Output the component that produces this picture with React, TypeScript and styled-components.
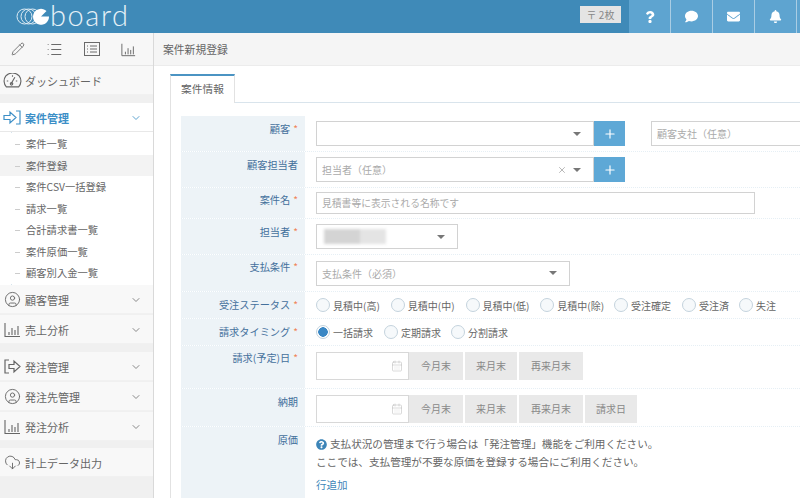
import React from "react";
import styled, { createGlobalStyle } from "styled-components";
import { FaQuestion, FaComment, FaEnvelope, FaBell, FaQuestionCircle } from "react-icons/fa";
import { ChevronDown, Plus, X, Pencil, List, CircleUser, CloudDownload, CalendarDays } from "lucide-react";

const Global = createGlobalStyle`
  html, body { margin: 0; padding: 0; background: #fff; }
  body { font-family: "Noto Sans CJK JP", "Noto Sans", sans-serif; font-size: 10.5px; color: #666; }
  * { box-sizing: border-box; }
`;

const Page = styled.div`width: 800px; height: 498px; overflow: hidden; display: flex; flex-direction: column;`;

/* header */
const Header = styled.header`height: 33px; flex: none; display: flex; align-items: stretch; background: #3f8ab8;`;
const Logo = styled.div`display: flex; align-items: center; padding-left: 16px; flex: 1;`;
const LogoText = styled.span`font-family: Lato, "Open Sans", sans-serif; font-weight: 300; font-size: 29px; line-height: 27px; letter-spacing: 1.6px; color: #e6f1f7; margin-bottom: 5px;`;
const Stamp = styled.div`align-self: flex-start; margin: 6px 8px 0 0; width: 41px; height: 17px; background: #e4e4e4; color: #888; font-size: 10px; line-height: 17px; text-align: center;`;
const HeadBtn = styled.button`width: 42px; border: 0; border-right: 1px solid #a9cde4; background: #5ea4d0; color: #fff; display: flex; align-items: center; justify-content: center; padding: 0; font-size: 14px;`;
const HeadEnd = styled.div`width: 3px; background: #5ea4d0;`;

const Body = styled.div`flex: 1; display: flex; min-height: 0;`;

/* sidebar */
const Sidebar = styled.aside`width: 154px; flex: none; background: #f0f0f0; border-right: 1px solid #d9d9d9; display: flex; flex-direction: column;`;
const ToolBar = styled.div`height: 33px; background: #f7f7f7; border-bottom: 1px solid #e6e6e6; display: flex; align-items: center; justify-content: space-between; padding: 0 17px 0 11px; color: #6a6a6a;`;
const Group = styled.div`display: flex; flex-direction: column; gap: 1px; margin-bottom: ${p => p.$gap ?? 8}px;`;
const NavItem = styled.div`height: 29px; display: flex; align-items: center; padding: 1px 11px 0 3px; gap: 3px; font-size: 11px;
  background: ${p => p.$active ? "#fff" : "#f8f8f8"};
  color: ${p => p.$active ? "#3d8fc7" : "#666"};
  font-weight: ${p => p.$active ? 700 : 400};
  border-bottom: 1px solid ${p => p.$active ? "#e8e8e8" : "#f1f1f1"};
`;
const NavLabel = styled.span`flex: 1; white-space: nowrap;`;
const NavIcon = styled.span`width: 19px; height: 19px; display: flex; align-items: center; justify-content: center; flex: none;`;
const Chevron = styled(ChevronDown)`color: ${p => p.$active ? "#5ea4d0" : "#888"}; flex: none;`;
const SubList = styled.div`background: #fff; padding: 1px 0 1.5px; position: relative;
  &::before { content: ""; position: absolute; left: 11px; top: 0; bottom: 0; width: 1px; background: #d5e3ec; }`;
const SubItem = styled.div`height: 21.5px; line-height: 21.5px; padding-left: 26px; font-size: 10.3px; white-space: nowrap; color: #666; position: relative;
  background: ${p => p.$active ? "#f3f3f3" : "#fff"};
  &::before { content: ""; position: absolute; left: 15px; top: 11px; width: 5px; height: 1px; background: #ccc; }`;

/* main */
const Main = styled.main`flex: 1; min-width: 0; display: flex; flex-direction: column;`;
const Crumb = styled.div`height: 33px; flex: none; background: #f5f5f5; border-bottom: 1px solid #ececec; padding-left: 9px; line-height: 33px; font-size: 10.8px; color: #666;`;
const Panel = styled.div`flex: 1; padding: 8px 0 0 16px; display: flex; flex-direction: column; min-height: 0;`;
const Tabs = styled.div`height: 29px; flex: none; border-bottom: 1px solid #d9e4ec; display: flex;`;
const Tab = styled.div`width: 65px; height: 29px; background: #fff; border: 1px solid #e2e2e2; border-top: 2px solid #4b94c3; border-bottom: 0; text-align: center; line-height: 26px; font-size: 10.7px; color: #666;`;
const Content = styled.div`flex: 1; border-left: 1px solid #e2e2e2; padding: 13px 0 0 10px;`;
const Row = styled.div`display: flex; height: ${p => p.$h}px; border-bottom: 1px dotted #e6eff5;`;
const Label = styled.div`width: 124px; flex: none; background: #edf3f7; color: #44709c; text-align: right; font-size: 10.2px; padding: ${p => p.$top ?? 5}px 7px 0 0; white-space: nowrap;
  i { font-style: normal; color: #f0855a; margin-left: 3px; }`;
const Field = styled.div`flex: 1; min-width: 0; display: flex; align-items: ${p => p.$start ? "flex-start" : "center"}; padding-left: 11px; position: relative; ${p => p.$col ? "flex-direction: column; align-items: flex-start;" : ""}`;
const Input = styled.div`width: ${p => p.$w}px; height: ${p => p.$h ?? 25}px; flex: none; border: 1px solid #d2d2d2; background: #fff; display: flex; align-items: center; padding: 0 5px; color: #aaa; font-size: ${p => p.$fs ?? 10}px; white-space: nowrap; gap: 6px;`;
const Hint = styled.span`flex: 1; overflow: hidden;`;
const Caret = styled.span`width: 0; height: 0; border: 4px solid transparent; border-top: 4.5px solid #777; border-bottom: 0; flex: none; margin-right: 7px;`;
const AddBtn = styled.button`width: 31px; height: 25px; flex: none; border: 0; padding: 0; background: #5ea8d6; color: #fff; display: flex; align-items: center; justify-content: center;`;
const Branch = styled(Input)`margin-left: 26px;`;
const Blurred = styled.span`width: 62px; height: 15px; margin-left: 2px; background: linear-gradient(90deg, #d4d4d4 0 58%, #e4e4e4 58% 100%); filter: blur(1.5px);`;
const Radios = styled.div`display: flex; align-items: center;`;
const RadioItem = styled.label`display: flex; align-items: center; gap: 3px; margin-right: ${p => p.$mr}px; font-size: 10px; color: #666; white-space: nowrap;`;
const Dot = styled.span`width: 14px; height: 14px; border-radius: 50%; flex: none; border: 1px solid #c4d3dd; background: ${p => p.$on ? "radial-gradient(circle, #3a87c4 0 4.5px, #fff 5px)" : "#f6f9fb"};`;
const DateGroup = styled.div`display: flex; gap: 2px; margin-top: 6px;`;
const DateInput = styled.div`width: 93px; height: 28px; border: 1px solid #d8d8d8; background: #fff; display: flex; align-items: center; justify-content: flex-end; padding-right: 5px; color: #b5b5b5; margin-right: -2px;`;
const DateBtn = styled.div`width: ${p => p.$w}px; height: 28px; background: #e9e9e9; color: #888; font-size: 10px; line-height: 27px; text-align: center;`;
const Note = styled.p`margin: 8px 0 0; font-size: 10.6px; line-height: 18px; color: #666; white-space: nowrap;
  svg { color: #3d85b8; vertical-align: -2px; margin-right: 3px; }`;
const AddLink = styled.a`margin-top: 6px; font-size: 10.5px; color: #3d85b8;`;

const Bars = ({ size = 17 }: { size?: number }) => (
  <svg width={size} height={size} viewBox="0 0 17 17" fill="none" stroke="currentColor" strokeWidth="1.1">
    <path d="M1 2v13.5h15M5 14v-3M8 14V7M11 14v-5M14 14V5" />
  </svg>
);
const ArrowIn = () => (
  <svg width="19" height="15" viewBox="0 0 19 15" fill="none" stroke="currentColor" strokeWidth="1.2">
    <path d="M1 5.5h6V2l6 5.5L7 13V9.5H1zM13 1h4v13h-4" />
  </svg>
);
const ArrowOut = () => (
  <svg width="19" height="15" viewBox="0 0 19 15" fill="none" stroke="currentColor" strokeWidth="1.2">
    <path d="M6 1H2v13h4M6 5.5h5V2l6 5.5L11 13V9.5H6z" />
  </svg>
);
const BoxList = () => (
  <svg width="16" height="14" viewBox="0 0 16 14" fill="none" stroke="currentColor" strokeWidth="1">
    <rect x=".5" y=".5" width="15" height="13" /><path d="M3 4h1M3 7h1M3 10h1M6 4h7M6 7h7M6 10h7" />
  </svg>
);
const GaugeIcon = () => (
  <svg width="20" height="15" viewBox="0 0 20 15" fill="none" stroke="currentColor" strokeWidth="1.2">
    <path d="M3.5 14.2A9 9 0 0 1 3 2.7 9.5 9.5 0 0 1 17 2.7a9 9 0 0 1-.5 11.5z" />
    <path d="M8.5 11l4-7M10 2v1.5M4 8h1.5M15 8h-1.5" />
    <circle cx="9" cy="11" r="1.3" />
  </svg>
);
const LogoMark = () => (
  <svg width="34" height="24" viewBox="0 0 34 24" fill="none" stroke="#dcebf4" strokeWidth="1">
    <circle cx="8.5" cy="11.5" r="7.5" /><circle cx="12.5" cy="11.5" r="7.5" /><circle cx="16.5" cy="11.5" r="7.5" />
    <path d="M25 11.5L30.5 6A8 8 0 1 0 33 11.5z" fill="#fff" stroke="none" />
  </svg>
);

const nav = (icon: React.ReactNode, label: string, active = false) => (
  <NavItem $active={active}>
    <NavIcon>{icon}</NavIcon>
    <NavLabel>{label}</NavLabel>
    <Chevron $active={active} size={12} />
  </NavItem>
);

const statuses: [string, number][] = [["見積中(高)", 11], ["見積中(中)", 11], ["見積中(低)", 11], ["見積中(除)", 10], ["受注確定", 11], ["受注済", 10], ["失注", 0]];
const timings: [string, number, boolean][] = [["一括請求", 11, true], ["定期請求", 10, false], ["分割請求", 0, false]];

const Required = () => <i>*</i>;

export default function App() {
  return (
    <Page>
      <Global />
      <Header>
        <Logo><LogoMark /><LogoText>board</LogoText></Logo>
        <Stamp>〒 2枚</Stamp>
        <HeadBtn><FaQuestion size={12} /></HeadBtn>
        <HeadBtn><FaComment size={13} /></HeadBtn>
        <HeadBtn><FaEnvelope size={13} /></HeadBtn>
        <HeadBtn><FaBell size={13} /></HeadBtn>
        <HeadEnd />
      </Header>
      <Body>
        <Sidebar>
          <ToolBar>
            <Pencil size={14} strokeWidth={1.5} />
            <List size={17} strokeWidth={1.5} />
            <BoxList />
            <Bars size={15} />
          </ToolBar>
          <Group>
            <NavItem><NavIcon><GaugeIcon /></NavIcon><NavLabel>ダッシュボード</NavLabel></NavItem>
          </Group>
          <div>
            {nav(<ArrowIn />, "案件管理", true)}
            <SubList>
              <SubItem>案件一覧</SubItem>
              <SubItem $active>案件登録</SubItem>
              <SubItem>案件CSV一括登録</SubItem>
              <SubItem>請求一覧</SubItem>
              <SubItem>合計請求書一覧</SubItem>
              <SubItem>案件原価一覧</SubItem>
              <SubItem>顧客別入金一覧</SubItem>
            </SubList>
          </div>
          <Group>
            {nav(<CircleUser size={17} strokeWidth={1.3} />, "顧客管理")}
            {nav(<Bars />, "売上分析")}
          </Group>
          <Group $gap={7}>
            {nav(<ArrowOut />, "発注管理")}
            {nav(<CircleUser size={17} strokeWidth={1.3} />, "発注先管理")}
            {nav(<Bars />, "発注分析")}
          </Group>
          <Group>
            <NavItem><NavIcon><CloudDownload size={17} strokeWidth={1.3} /></NavIcon><NavLabel>計上データ出力</NavLabel></NavItem>
          </Group>
        </Sidebar>
        <Main>
          <Crumb>案件新規登録</Crumb>
          <Panel>
            <Tabs><Tab>案件情報</Tab></Tabs>
            <Content>
              <Row $h={36}>
                <Label>顧客<Required /></Label>
                <Field>
                  <Input $w={278}><Hint /><Caret /></Input>
                  <AddBtn><Plus size={14} /></AddBtn>
                  <Branch $w={160}><Hint>顧客支社（任意）</Hint></Branch>
                </Field>
              </Row>
              <Row $h={36}>
                <Label>顧客担当者</Label>
                <Field>
                  <Input $w={278}><Hint>担当者（任意）</Hint><X size={10} color="#aaa" /><Caret /></Input>
                  <AddBtn><Plus size={14} /></AddBtn>
                </Field>
              </Row>
              <Row $h={31}>
                <Label $top={4}>案件名<Required /></Label>
                <Field><Input $w={439} $h={22} $fs={9.8}><Hint>見積書等に表示される名称です</Hint></Input></Field>
              </Row>
              <Row $h={36}>
                <Label>担当者<Required /></Label>
                <Field><Input $w={142}><Blurred /><Hint /><Caret /></Input></Field>
              </Row>
              <Row $h={37}>
                <Label $top={4}>支払条件<Required /></Label>
                <Field><Input $w={254}><Hint>支払条件（必須）</Hint><Caret /></Input></Field>
              </Row>
              <Row $h={27}>
                <Label>受注ステータス<Required /></Label>
                <Field>
                  <Radios>
                    {statuses.map(([t, m]) => <RadioItem key={t} $mr={m}><Dot />{t}</RadioItem>)}
                  </Radios>
                </Field>
              </Row>
              <Row $h={27}>
                <Label>請求タイミング<Required /></Label>
                <Field>
                  <Radios>
                    {timings.map(([t, m, on]) => <RadioItem key={t} $mr={m}><Dot $on={on} />{t}</RadioItem>)}
                  </Radios>
                </Field>
              </Row>
              <Row $h={43}>
                <Label $top={4}>請求(予定)日<Required /></Label>
                <Field $start>
                  <DateGroup>
                    <DateInput><CalendarDays size={12} strokeWidth={1} /></DateInput>
                    <DateBtn $w={54}>今月末</DateBtn>
                    <DateBtn $w={52}>来月末</DateBtn>
                    <DateBtn $w={64}>再来月末</DateBtn>
                  </DateGroup>
                </Field>
              </Row>
              <Row $h={38}>
                <Label>納期</Label>
                <Field $start>
                  <DateGroup>
                    <DateInput><CalendarDays size={12} strokeWidth={1} /></DateInput>
                    <DateBtn $w={54}>今月末</DateBtn>
                    <DateBtn $w={52}>来月末</DateBtn>
                    <DateBtn $w={64}>再来月末</DateBtn>
                    <DateBtn $w={52}>請求日</DateBtn>
                  </DateGroup>
                </Field>
              </Row>
              <Row $h={85}>
                <Label>原価</Label>
                <Field $col>
                  <Note>
                    <FaQuestionCircle size={11} />支払状況の管理まで行う場合は「発注管理」機能をご利用ください。<br />
                    ここでは、支払管理が不要な原価を登録する場合にご利用ください。
                  </Note>
                  <AddLink>行追加</AddLink>
                </Field>
              </Row>
            </Content>
          </Panel>
        </Main>
      </Body>
    </Page>
  );
}
